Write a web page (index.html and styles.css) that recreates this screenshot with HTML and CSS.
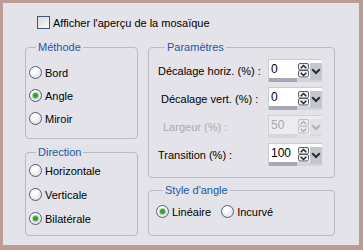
FILE: index.html
```html
<!DOCTYPE html>
<html lang="fr">
<head>
  <meta charset="UTF-8">
  <title>Mosaïque - Paramètres</title>
  <meta name="viewport" content="width=device-width, initial-scale=1.0">
  <link rel="stylesheet" href="styles.css">
</head>
<body>
  <div class="window">
    <!-- Preview toggle -->
    <label class="preview">
      <span class="checkbox"></span>
      <span>Afficher l'aperçu de la mosaïque</span>
    </label>

    <div class="columns">
      <div class="col col-left">
        <fieldset class="group group-method">
          <legend>Méthode</legend>
          <div class="radio-list">
            <label class="radio"><span class="radio-mark"></span>Bord</label>
            <label class="radio"><span class="radio-mark checked"></span>Angle</label>
            <label class="radio"><span class="radio-mark"></span>Miroir</label>
          </div>
        </fieldset>

        <fieldset class="group group-direction">
          <legend>Direction</legend>
          <div class="radio-list">
            <label class="radio"><span class="radio-mark"></span>Horizontale</label>
            <label class="radio"><span class="radio-mark"></span>Verticale</label>
            <label class="radio"><span class="radio-mark checked"></span>Bilatérale</label>
          </div>
        </fieldset>
      </div>

      <div class="col col-right">
        <fieldset class="group group-params">
          <legend>Paramètres</legend>

          <div class="param-row">
            <span class="param-label">Décalage horiz. (%) :</span>
            <div class="spin-box">
              <span class="spin-value">0</span>
              <svg class="spin-arrows" width="11" height="15" viewBox="0 0 11 15">
                <rect x="0.5" y="0.5" width="10" height="6.5" rx="1.5" fill="#eeeef2" stroke="#5a5f68"/>
                <path d="M2.7 5.3 L5.5 2.5 L8.3 5.3" fill="none" stroke="#1e2226" stroke-width="1.4"/>
                <rect x="0.5" y="7.5" width="10" height="6.5" rx="1.5" fill="#eeeef2" stroke="#5a5f68"/>
                <path d="M2.7 9.7 L5.5 12.5 L8.3 9.7" fill="none" stroke="#1e2226" stroke-width="1.4"/>
              </svg>
              <svg class="spin-drop" width="12" height="17" viewBox="0 0 12 17">
                <rect x="0" y="0" width="12" height="17" fill="#c6c6ce"/>
                <path d="M2.2 6.2 L6 10 L9.8 6.2" fill="none" stroke="#2a2e36" stroke-width="2"/>
              </svg>
            </div>
          </div>

          <div class="param-row">
            <span class="param-label param-label-vert">Décalage vert. (%) :</span>
            <div class="spin-box">
              <span class="spin-value">0</span>
              <svg class="spin-arrows" width="11" height="15" viewBox="0 0 11 15">
                <rect x="0.5" y="0.5" width="10" height="6.5" rx="1.5" fill="#eeeef2" stroke="#5a5f68"/>
                <path d="M2.7 5.3 L5.5 2.5 L8.3 5.3" fill="none" stroke="#1e2226" stroke-width="1.4"/>
                <rect x="0.5" y="7.5" width="10" height="6.5" rx="1.5" fill="#eeeef2" stroke="#5a5f68"/>
                <path d="M2.7 9.7 L5.5 12.5 L8.3 9.7" fill="none" stroke="#1e2226" stroke-width="1.4"/>
              </svg>
              <svg class="spin-drop" width="12" height="17" viewBox="0 0 12 17">
                <rect x="0" y="0" width="12" height="17" fill="#c6c6ce"/>
                <path d="M2.2 6.2 L6 10 L9.8 6.2" fill="none" stroke="#2a2e36" stroke-width="2"/>
              </svg>
            </div>
          </div>

          <div class="param-row">
            <span class="param-label param-label-width disabled-text">Largeur (%) :</span>
            <div class="spin-box disabled">
              <span class="spin-value">50</span>
              <svg class="spin-arrows" width="11" height="15" viewBox="0 0 11 15">
                <rect x="0.5" y="0.5" width="10" height="6.5" rx="1.5" fill="#eeeef2" stroke="#5a5f68"/>
                <path d="M2.7 5.3 L5.5 2.5 L8.3 5.3" fill="none" stroke="#1e2226" stroke-width="1.4"/>
                <rect x="0.5" y="7.5" width="10" height="6.5" rx="1.5" fill="#eeeef2" stroke="#5a5f68"/>
                <path d="M2.7 9.7 L5.5 12.5 L8.3 9.7" fill="none" stroke="#1e2226" stroke-width="1.4"/>
              </svg>
              <svg class="spin-drop" width="12" height="17" viewBox="0 0 12 17">
                <rect x="0" y="0" width="12" height="17" fill="#c6c6ce"/>
                <path d="M2.2 6.2 L6 10 L9.8 6.2" fill="none" stroke="#2a2e36" stroke-width="2"/>
              </svg>
            </div>
          </div>

          <div class="param-row param-row-last">
            <span class="param-label">Transition (%) :</span>
            <div class="spin-box">
              <span class="spin-value">100</span>
              <svg class="spin-arrows" width="11" height="15" viewBox="0 0 11 15">
                <rect x="0.5" y="0.5" width="10" height="6.5" rx="1.5" fill="#eeeef2" stroke="#5a5f68"/>
                <path d="M2.7 5.3 L5.5 2.5 L8.3 5.3" fill="none" stroke="#1e2226" stroke-width="1.4"/>
                <rect x="0.5" y="7.5" width="10" height="6.5" rx="1.5" fill="#eeeef2" stroke="#5a5f68"/>
                <path d="M2.7 9.7 L5.5 12.5 L8.3 9.7" fill="none" stroke="#1e2226" stroke-width="1.4"/>
              </svg>
              <svg class="spin-drop" width="12" height="17" viewBox="0 0 12 17">
                <rect x="0" y="0" width="12" height="17" fill="#c6c6ce"/>
                <path d="M2.2 6.2 L6 10 L9.8 6.2" fill="none" stroke="#2a2e36" stroke-width="2"/>
              </svg>
            </div>
          </div>
        </fieldset>

        <fieldset class="group group-style">
          <legend>Style d'angle</legend>
          <div class="radio-inline">
            <label class="radio"><span class="radio-mark checked"></span>Linéaire</label>
            <label class="radio"><span class="radio-mark"></span>Incurvé</label>
          </div>
        </fieldset>
      </div>
    </div>
  </div>
</body>
</html>
```

FILE: styles.css
```css
/* Dialog colours */
:root {
  --frame: #bc9b92;
  --face: #e3e3e9;
  --group-line: #b9b9c2;
  --legend: #2157a5;
  --mark-line: #4d6177;
}

* {
  box-sizing: border-box;
}

body {
  margin: 0;
  font-family: "Liberation Sans", Arial, sans-serif;
  font-size: 11px;
  color: #000;
}

/* Outer window with its brownish frame */
.window {
  width: 363px;
  height: 250px;
  background: var(--face);
  border-style: solid;
  border-color: var(--frame);
  border-width: 3px 4px 5px 3px;
  padding: 13px 0 0 22px;
}

.preview {
  display: flex;
  align-items: center;
  gap: 3px;
  height: 13px;
  margin-left: 12px;
}

.checkbox {
  width: 13px;
  height: 13px;
  border: 1px solid #3f5672;
  background: linear-gradient(135deg, #d9d9e0, #fafafa);
}

.columns {
  display: flex;
  gap: 10px;
  margin-top: 12px;
}

.col {
  display: flex;
  flex-direction: column;
}
.col-left {
  width: 113px;
  gap: 7px;
}
.col-right {
  width: 187px;
  gap: 6px;
}

/* Group boxes */
.group {
  margin: 0;
  min-width: 0;
  border: 1px solid var(--group-line);
  border-radius: 4px;
  padding: 0 3px;
}
.group legend {
  margin-left: 7px;
  padding: 0 2px;
  color: var(--legend);
  line-height: 13px;
}

.group-method {
  height: 98px;
  padding-top: 7px;
}
.group-direction {
  height: 90px;
  padding-top: 0;
}
.group-params {
  height: 137px;
  padding: 5px 12px 0 9px;
}
.group-style {
  height: 52px;
  padding: 3px 7px 0 7px;
}

/* Radio buttons */
.radio-list {
  display: flex;
  flex-direction: column;
}
.group-direction .radio-list {
  gap: 1px;
}
.radio-inline {
  display: flex;
  gap: 10px;
}

.radio {
  display: flex;
  align-items: center;
  gap: 3px;
  height: 23px;
}

.radio-mark {
  width: 13px;
  height: 13px;
  border-radius: 50%;
  border: 1px solid var(--mark-line);
  background: radial-gradient(circle at 38% 32%, #ffffff 20%, #d3d3dc 100%);
  display: flex;
  align-items: center;
  justify-content: center;
}
.radio-mark.checked::after {
  content: "";
  width: 5px;
  height: 5px;
  border-radius: 50%;
  background: #3b9a3b;
  box-shadow: 0 0 0 1px #a6d6a4;
}

/* Parameter rows */
.param-row {
  display: flex;
  align-items: center;
  justify-content: space-between;
  height: 23px;
  margin-bottom: 5px;
}
.param-row-last {
  margin-top: 3px;
}
.param-label-vert {
  padding-left: 3px;
}
.param-label-width {
  padding-left: 5px;
}
.disabled-text {
  color: #a9a9b1;
}

/* Spin box: value, up/down arrows, dropdown, slider track at the bottom */
.spin-box {
  width: 54px;
  height: 23px;
  display: flex;
  align-items: flex-start;
  border-top: 1px solid #cacad2;
  border-left: 1px solid #cacad2;
  padding: 2px 0 0 2px;
  background:
    linear-gradient(to right, #a8a8b2 28px, #d3d3da 28px) left bottom / 100% 4px no-repeat,
    #ffffff;
}
.spin-value {
  flex: 1;
  font-size: 12px;
  line-height: 14px;
}
.spin-arrows {
  margin-top: 1px;
  margin-right: 1px;
}
.spin-drop {
  margin-top: 1px;
}

.spin-box.disabled {
  border-color: #d0d0d6;
  background:
    linear-gradient(to right, #d6d6dc 28px, #e2e2e6 28px) left bottom / 100% 4px no-repeat,
    #ececf0;
}
.spin-box.disabled .spin-value {
  color: #a9a9b1;
}
.spin-box.disabled svg {
  opacity: 0.3;
}
```
